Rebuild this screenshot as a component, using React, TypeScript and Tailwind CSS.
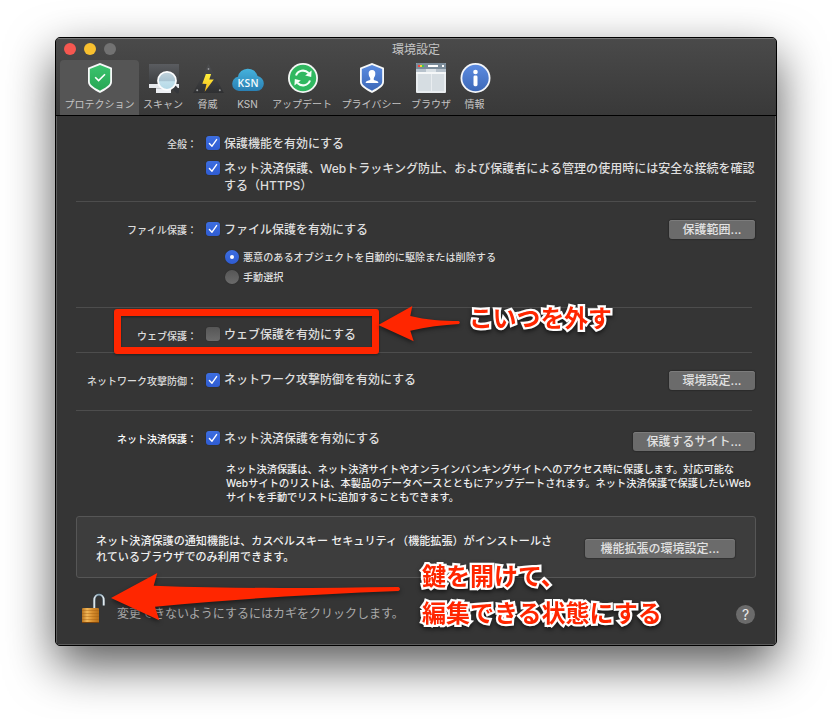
import type { ReactNode } from 'react';

const sans = "font-['Inter','Noto_Sans_CJK_JP',sans-serif]";

function Shield({ id, from, to, children }: { id: string; from: string; to: string; children: ReactNode }) {
  return (
    <svg width="32" height="32" viewBox="0 0 32 32">
      <defs>
        <linearGradient id={id} x1="0" y1="0" x2="0" y2="1">
          <stop offset="0" stopColor={from} />
          <stop offset="1" stopColor={to} />
        </linearGradient>
      </defs>
      <path d="M16 1 L28 5.8 V20 C28 24.4 22.5 27.4 16 31 C9.5 27.4 4 24.4 4 20 V5.8 Z" fill="#f6f8f8" />
      <path d="M16 3.1 L26.2 7 V19.8 C26.2 23.2 21.6 25.7 16 28.8 C10.4 25.7 5.8 23.2 5.8 19.8 V7 Z" fill={`url(#${id})`} />
      {children}
    </svg>
  );
}

function ScanIcon() {
  return (
    <svg width="32" height="32" viewBox="-1 0 32 32">
      <defs>
        <linearGradient id="scanBg" x1="0" y1="0" x2="0" y2="1">
          <stop offset="0" stopColor="#5a5c60" />
          <stop offset="1" stopColor="#3d3e41" />
        </linearGradient>
        <linearGradient id="lens" x1="0" y1="0" x2="0" y2="1">
          <stop offset="0" stopColor="#c3d3dc" />
          <stop offset=".5" stopColor="#a9c4d2" />
          <stop offset=".55" stopColor="#c2e0ec" />
          <stop offset="1" stopColor="#b3d8e6" />
        </linearGradient>
      </defs>
      <path d="M1 2 H31 V22 H1 Z" fill="url(#scanBg)" />
      <path d="M1 22 H31 V26 H1 Z" fill="#e6e8ec" />
      <path d="M8 26 H23 V31 H8 Z" fill="#eef0f4" />
      <path d="M8 26 H23 V27 H8 Z" fill="#c9ccd2" />
      <path d="M25 24 L29.5 29" stroke="#35373b" strokeWidth="4.5" strokeLinecap="round" />
      <circle cx="19" cy="18.8" r="9" fill="url(#lens)" stroke="#fbfcfd" strokeWidth="1.8" />
    </svg>
  );
}

function ThreatIcon() {
  return (
    <svg width="32" height="32" viewBox="-.5 0 32 32">
      <defs>
        <linearGradient id="tri" x1="0" y1="0" x2="0" y2="1">
          <stop offset="0" stopColor="#4d4e50" />
          <stop offset="1" stopColor="#2f3032" />
        </linearGradient>
        <linearGradient id="bolt" x1="0" y1="0" x2="0" y2="1">
          <stop offset="0" stopColor="#fff13c" />
          <stop offset="1" stopColor="#f6b81c" />
        </linearGradient>
      </defs>
      <path d="M16 2 L31.5 31 H.5 Z" fill="url(#tri)" />
      <circle cx="16" cy="7" r=".9" fill="#95979a" />
      <circle cx="4.7" cy="28.3" r="1" fill="#95979a" />
      <circle cx="27.3" cy="28.3" r="1" fill="#95979a" />
      <path d="M13.4 12 H18.6 L16.8 17.5 L21.3 17.6 L12.2 29.8 L14 22 L9.8 21.8 Z" fill="url(#bolt)" />
    </svg>
  );
}

function CloudIcon() {
  return (
    <svg width="32" height="32" viewBox="0 0 32 32">
      <defs>
        <linearGradient id="cloud" x1="0" y1="0" x2="0" y2="1">
          <stop offset="0" stopColor="#45b2dc" />
          <stop offset="1" stopColor="#2a80b4" />
        </linearGradient>
      </defs>
      <path d="M7 29 A7 7 0 0 1 .2 21.8 A7 7 0 0 1 6 14.8 A10 9.6 0 0 1 25.6 14 A7.6 7.6 0 0 1 31.8 21.6 A7.2 7.2 0 0 1 24.6 29 Z" fill="url(#cloud)" />
      <text x="16.3" y="24.9" textAnchor="middle" fontSize="10.3" fontWeight="600" letterSpacing=".5" fill="#f3fafd" className="font-['Open_Sans',sans-serif]">KSN</text>
    </svg>
  );
}

function UpdateIcon() {
  return (
    <svg width="32" height="32" viewBox="0 0 32 32">
      <circle cx="17" cy="16" r="15" fill="#f4f7f5" />
      <circle cx="17" cy="16" r="13.2" fill="#30b860" />
      <path d="M10 13.5 C12 8.2 18.5 7 22.6 11" fill="none" stroke="#f5fff8" strokeWidth="2.1" />
      <path d="M25.6 8.6 L25.2 15 L19.2 13.4 Z" fill="#f5fff8" />
      <path d="M24 18.5 C22 23.8 15.5 25 11.4 21" fill="none" stroke="#f5fff8" strokeWidth="2.1" />
      <path d="M8.4 23.4 L8.8 17 L14.8 18.6 Z" fill="#f5fff8" />
    </svg>
  );
}

function BrowserIcon() {
  return (
    <svg width="32" height="32" viewBox="0 0 32 32">
      <rect x="1" y="1" width="30" height="30" rx="1" fill="#e9edf0" />
      <path d="M1 2 a1 1 0 0 1 1 -1 H30 a1 1 0 0 1 1 1 V7 H1 Z" fill="#7b8c9a" />
      <rect x="1" y="7" width="30" height="3" fill="#b7c2cc" />
      <rect x="11" y="7" width="10" height="3" fill="#dbe2e7" />
      <rect x="1" y="10" width="30" height="2" fill="#f5f7f8" />
      <rect x="3" y="3" width="2" height="2" fill="#f4433a" />
      <rect x="5" y="3" width="2" height="2" fill="#f7d32b" />
      <rect x="7" y="3" width="2" height="2" fill="#40c94c" />
      <rect x="13" y="3" width="10" height="2" fill="#fff" />
      <rect x="27" y="3" width="2" height="2" fill="#fff" />
      <rect x="3" y="12" width="13" height="17" fill="#d6dde2" />
      <rect x="17" y="12" width="12" height="17" fill="#d6dde2" />
    </svg>
  );
}

function InfoIcon() {
  return (
    <svg width="32" height="32" viewBox="0 0 32 32">
      <defs>
        <linearGradient id="info" x1="0" y1="0" x2="0" y2="1">
          <stop offset="0" stopColor="#5c8be0" />
          <stop offset="1" stopColor="#3d69b8" />
        </linearGradient>
      </defs>
      <circle cx="16.5" cy="16" r="15" fill="#f5f7fa" />
      <circle cx="16.5" cy="16" r="13.2" fill="url(#info)" />
      <circle cx="16.5" cy="10" r="2.3" fill="#fff" />
      <rect x="14.5" y="13.6" width="4" height="10.6" rx="1.4" fill="#fff" />
    </svg>
  );
}

function Tool({ w, label, active, children }: { w: string; label: string; active?: boolean; children: ReactNode }) {
  return (
    <div className={`${w} flex h-[55px] shrink-0 flex-col items-center rounded-t-[4px] pt-[2px] ${active ? 'bg-[#555]' : ''}`}>
      {children}
      <span className="mt-[3px] text-[10px] leading-[14px] whitespace-nowrap text-[#c4c4c4]">{label}</span>
    </div>
  );
}

function Check({ on }: { on?: boolean }) {
  return (
    <span className={`mr-[4px] flex size-[14px] shrink-0 items-center justify-center rounded-[3px] shadow-[0_0_1px_rgba(0,0,0,.5)] ${on ? 'bg-linear-to-b from-[#3d6ee0] to-[#2f5cd2]' : 'bg-linear-to-b from-[#565656] to-[#6b6b6b]'}`}>
      {on && (
        <svg width="14" height="14" viewBox="0 0 14 14">
          <path d="M3.4 7.4 L6 10.2 L10.6 3.6" fill="none" stroke="#fff" strokeWidth="1.4" strokeLinecap="round" strokeLinejoin="round" />
        </svg>
      )}
    </span>
  );
}

function Setting({ label, text, on, bright, drop, level, button, bw }: { label: string; text: string; on?: boolean; bright?: boolean; drop?: boolean; level?: boolean; button?: string; bw?: string }) {
  return (
    <div className="flex h-[14px] items-center">
      <span className={`mr-[9px] w-[121px] shrink-0 text-right text-[10px] leading-[14px] font-medium whitespace-nowrap ${drop ? 'pt-[3px]' : 'pt-[2px]'} ${bright ? 'text-white' : 'text-[#dcdcdc]'}`}>{label}</span>
      <Check on={on} />
      <span className={`text-[12px] leading-[14px] font-medium whitespace-nowrap text-[#dedede] ${level ? '' : 'pt-[2px]'}`}>{text}</span>
      {button && <Push w={bw!} text={button} />}
    </div>
  );
}

function Push({ w, text }: { w: string; text: string }) {
  return (
    <button className={`${w} ml-auto block h-[19px] shrink-0 rounded-[3px] bg-[#6b6b6b] text-[12px] leading-[19px] font-medium whitespace-nowrap text-[#e2e2e2] shadow-[inset_0_1px_0_#7c7c7c,0_0_1px_1px_rgba(0,0,0,.2)]`}>
      {text}
    </button>
  );
}

function Radio({ on, text }: { on?: boolean; text: string }) {
  return (
    <div className="flex h-[14px] items-center">
      <span className={`mr-[4px] flex size-[14px] items-center justify-center rounded-full shadow-[0_0_1px_rgba(0,0,0,.5)] ${on ? 'bg-linear-to-b from-[#3d6ee0] to-[#2f5cd2]' : 'bg-linear-to-b from-[#565656] to-[#6b6b6b]'}`}>
        {on && <span className="size-[4px] rounded-full bg-white" />}
      </span>
      <span className="text-[10.15px] leading-[14px] font-medium whitespace-nowrap text-[#dedede]">{text}</span>
    </div>
  );
}

function Padlock() {
  return (
    <svg width="26" height="32" viewBox="-1 0 26 32">
      <defs>
        <linearGradient id="brass" x1="0" y1="0" x2="1" y2="0">
          <stop offset="0" stopColor="#b87420" />
          <stop offset=".3" stopColor="#f1b758" />
          <stop offset=".6" stopColor="#d98f2e" />
          <stop offset="1" stopColor="#b56e18" />
        </linearGradient>
        <linearGradient id="steel" x1="0" y1="0" x2="1" y2="0">
          <stop offset="0" stopColor="#dfe7ec" />
          <stop offset=".5" stopColor="#7f9cae" />
          <stop offset="1" stopColor="#e7eef2" />
        </linearGradient>
      </defs>
      <path d="M13.3 16 V8.2 C13.3 .8 22.7 .8 22.7 8.2 V13.5" fill="none" stroke="#34414a" strokeWidth="3" />
      <path d="M13.3 16 V8.2 C13.3 .8 22.7 .8 22.7 8.2 V13.5" fill="none" stroke="url(#steel)" strokeWidth="1.9" />
      <rect x="1" y="16" width="17" height="15" rx="1" fill="url(#brass)" />
      <path d="M1 18.5 H18 M1 21.5 H18 M1 24.5 H18 M1 27.5 H18" stroke="#a35f12" strokeWidth=".7" opacity=".6" />
      <path d="M1 30.5 H18" stroke="#7d450c" />
    </svg>
  );
}

const note =
  'absolute font-bold whitespace-nowrap text-[#ff2600] [-webkit-text-stroke:4.5px_#fff] [paint-order:stroke_fill] [stroke-linejoin:round] drop-shadow-[0_2px_2px_rgba(0,0,0,.6)]';

export default function App() {
  return (
    <div className={`relative h-[719px] w-[832px] overflow-hidden bg-white pt-[37px] pl-[55px] ${sans}`}>
      <div className="flex h-[609px] w-[722px] flex-col overflow-hidden rounded-[5px] border border-black bg-[#353535] shadow-[0_19px_48px_rgba(0,0,0,.66)]">
        <header className="h-[78px] shrink-0 border-b border-black bg-linear-to-b from-[#4a4a4a] to-[#393939] shadow-[inset_0_1px_0_#777]">
          <div className="flex h-[22px] items-center">
            <div className="flex w-[120px] gap-[8px] pl-[8px]">
              <span className="size-[12px] rounded-full bg-[#f55750]" />
              <span className="size-[12px] rounded-full bg-[#f8c02f]" />
              <span className="size-[12px] rounded-full bg-[#727272]" />
            </div>
            <div className="flex-1 pt-[2px] pr-[120px] text-center text-[12px] leading-[14px] text-[#c4c4c4]">環境設定</div>
          </div>
          <nav className="flex pl-[4px]">
            <Tool w="w-[79px]" label="プロテクション" active>
              <Shield id="green" from="#3bc46e" to="#27a553">
                <path d="M11.2 15.2 L14.6 18.6 L21 12.2" fill="none" stroke="#fff" strokeWidth="1.6" />
              </Shield>
            </Tool>
            <Tool w="w-[48px]" label="スキャン"><ScanIcon /></Tool>
            <Tool w="w-[41px]" label="脅威"><ThreatIcon /></Tool>
            <Tool w="w-[39px]" label="KSN"><CloudIcon /></Tool>
            <Tool w="w-[70px]" label="アップデート"><UpdateIcon /></Tool>
            <Tool w="w-[69px]" label="プライバシー">
              <Shield id="blue" from="#5a8be0" to="#3d69b8">
                <path d="M16 8 C18.6 8 19.6 9.8 19.3 12.2 C19.1 14 18.4 15.2 17.8 16 V18 C20 18.6 22.4 19 22.4 21 H9.6 C9.6 19 12 18.6 14.2 18 V16 C13.6 15.2 12.9 14 12.7 12.2 C12.4 9.8 13.4 8 16 8 Z" fill="#fff" />
              </Shield>
            </Tool>
            <Tool w="w-[50px]" label="ブラウザ"><BrowserIcon /></Tool>
            <Tool w="w-[37px]" label="情報"><InfoIcon /></Tool>
          </nav>
        </header>

        <main className="flex flex-1 flex-col border border-t-0 border-[#5c5c5c] pr-[19px] pl-[19px]">
          <section className="h-[86px] shrink-0 border-b border-[#4d4d4d] pt-[20px]">
            <Setting label="全般：" text="保護機能を有効にする" on />
            <div className="mt-[11px] flex pl-[130px]">
              <Check on />
              <p className="-mt-[1px] text-[12.04px] leading-[17px] font-medium whitespace-nowrap text-[#dedede]">
                ネット決済保護、Webトラッキング防止、および保護者による管理の使用時には安全な接続を確認
                <br />
                する（HTTPS）
              </p>
            </div>
          </section>

          <section className="mr-[4px] h-[106px] shrink-0 border-b border-[#4d4d4d] pt-[20px]">
            <div className="-mr-[3px]">
              <Setting label="ファイル保護：" text="ファイル保護を有効にする" on button="保護範囲..." bw="w-[86px]" />
            </div>
            <div className="mt-[14px] flex flex-col gap-[6px] pl-[149px]">
              <Radio on text="悪意のあるオブジェクトを自動的に駆除または削除する" />
              <Radio text="手動選択" />
            </div>
          </section>

          <section className="mr-[4px] h-[45px] shrink-0 border-b border-[#4d4d4d] pt-[19px]">
            <Setting label="ウェブ保護：" text="ウェブ保護を有効にする" drop />
          </section>

          <section className="mr-[4px] h-[58px] shrink-0 border-b border-[#4d4d4d] pt-[20px]">
            <div className="-mr-[3px]">
              <Setting label="ネットワーク攻撃防御：" text="ネットワーク攻撃防御を有効にする" on level button="環境設定..." bw="w-[86px]" />
            </div>
          </section>

          <section className="flex h-[105px] shrink-0 pt-[20px] pr-[1px]">
            <div className="w-0 flex-1">
              <Setting label="ネット決済保護：" text="ネット決済保護を有効にする" on bright />
              <p className="mt-[17px] pl-[150px] text-[10.2px] leading-[14px] font-medium whitespace-nowrap text-[#f0f0f0]">
                ネット決済保護は、ネット決済サイトやオンラインバンキングサイトへのアクセス時に保護します。対応可能な
                <br />
                <span className="tracking-[0.07px]">Webサイトのリストは、本製品のデータベースとともにアップデートされます。ネット決済保護で保護したいWeb</span>
                <br />
                サイトを手動でリストに追加することもできます。
              </p>
            </div>
            <div className="pt-[1px]">
              <Push w="w-[122px]" text="保護するサイト..." />
            </div>
          </section>

          <section className="flex h-[62px] shrink-0 items-start rounded-[3px] border border-[#565656] bg-[#3d3d3d] pr-[20px] pl-[19px]">
            <p className="pt-[16px] text-[11.1px] leading-[16px] font-medium whitespace-nowrap text-[#f0f0f0]">
              ネット決済保護の通知機能は、カスペルスキー セキュリティ（機能拡張）がインストールさ
              <br />
              れているブラウザでのみ利用できます。
            </p>
            <div className="ml-auto pt-[22px]">
              <Push w="w-[150px]" text="機能拡張の環境設定..." />
            </div>
          </section>

          <footer className="flex h-[66px] shrink-0 items-start pt-[14px] pl-[4px]">
            <Padlock />
            <span className="mt-[14px] ml-[11px] text-[12px] leading-[16px] whitespace-nowrap text-[#a9a9a9]">変更できないようにするにはカギをクリックします。</span>
            <span className="mt-[13px] mr-[1px] ml-auto flex size-[19px] items-center justify-center rounded-full bg-[#6b6b6b] text-[14px] leading-[19px] text-[#ececec]">?</span>
          </footer>
        </main>
      </div>

      <div className="absolute top-[309px] left-[114px] h-[45px] w-[264.5px] rounded-[3px] border-[7px] border-[#ff2600] drop-shadow-[0_1px_1px_rgba(0,0,0,.4)]" />
      <svg className="absolute top-0 left-0 drop-shadow-[0_2px_2px_rgba(0,0,0,.5)]" width="832" height="719" viewBox="0 0 832 719" fill="#ff2600">
        <path d="M378.3 325 L412.3 306 L410.3 316 C426 320 443 321 458.7 321 Q461 322.4 458.7 324 C443 325 426 327 410.3 330.8 L413.7 341.3 Z" />
        <path d="M111 598 L157.3 573 L153.7 585.7 C235 589 318 588 398.5 587 Q401.5 589 398.5 591 C318 594 235 599 155 606.7 L159.3 620.3 Z" />
      </svg>
      <p className={`${note} top-[304px] left-[469px] text-[23.8px] leading-[30px]`}>こいつを外す</p>
      <p className={`${note} top-[558px] left-[422px] text-[24px] leading-[37px]`}>
        鍵を開けて、
        <br />
        編集できる状態にする
      </p>
    </div>
  );
}
